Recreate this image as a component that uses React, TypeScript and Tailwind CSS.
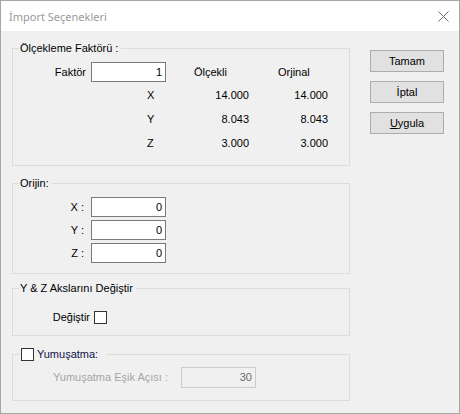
import React from 'react';

const rows = [
  { axis: 'X', scaled: '14.000', original: '14.000' },
  { axis: 'Y', scaled: '8.043', original: '8.043' },
  { axis: 'Z', scaled: '3.000', original: '3.000' },
];

const NumberBox: React.FC<{ value: string }> = ({ value }) => (
  <div className="flex h-[20px] w-[75px] items-center justify-end border border-[#7a7a7a] bg-white pr-[3px] text-black">
    {value}
  </div>
);

const CheckBox: React.FC = () => <div className="h-[13px] w-[13px] border border-[#333333] bg-white" />;

const DialogButton: React.FC<{ label: React.ReactNode }> = ({ label }) => (
  <button
    type="button"
    className="flex h-[22px] w-[74px] items-center justify-center border border-[#adadad] bg-[#e1e1e1] text-black"
  >
    {label}
  </button>
);

export default function App() {
  return (
    <div className="flex h-[414px] w-[460px] flex-col border border-[#a6a6a6] bg-[#f0f0f0] font-['Liberation_Sans',Arial,sans-serif] text-[11px] leading-[13px] text-black">
      <div className="flex h-[30px] shrink-0 items-center justify-between bg-white pl-[8px] pr-[9px]">
        <span className="font-['Noto_Sans',sans-serif] text-[11px] text-[#9a9a9a]">İmport Seçenekleri</span>
        <svg width="11" height="11" viewBox="0 0 11 11" className="mr-[1px]">
          <path d="M0.5 0.5 L10.5 10.5 M10.5 0.5 L0.5 10.5" stroke="#6b6b6b" strokeWidth="1" fill="none" />
        </svg>
      </div>

      <div className="flex flex-1 pl-[11px] pt-[11px]">
        <div className="flex w-[338px] flex-col">
          <fieldset className="h-[124px] border border-[#dcdcdc]">
            <legend className="ml-[6px] pl-[1px] pr-[3px] leading-[13px]">Ölçekleme Faktörü :</legend>
            <div className="mt-[7px] flex h-[20px] items-center">
              <span className="w-[73px] text-right">Faktör</span>
              <div className="ml-[5px]">
                <NumberBox value="1" />
              </div>
              <span className="ml-[28px] w-[84px]">Ölçekli</span>
              <span>Orjinal</span>
            </div>
            <div className="mt-[1px] flex flex-col">
              {rows.map((row) => (
                <div key={row.axis} className="flex h-[24px] items-center">
                  <span className="ml-[134px] w-[47px]">{row.axis}</span>
                  <span className="w-[55px] text-right">{row.scaled}</span>
                  <span className="ml-[29px] w-[50px] text-right">{row.original}</span>
                </div>
              ))}
            </div>
          </fieldset>

          <fieldset className="mt-[11px] h-[97px] border border-[#dcdcdc]">
            <legend className="ml-[6px] pl-[1px] pr-[3px] leading-[13px]">Orijin:</legend>
            <div className="mt-[7px] flex flex-col gap-[3px]">
              {['X', 'Y', 'Z'].map((axis) => (
                <div key={axis} className="flex h-[20px] items-center">
                  <span className="w-[71px] text-right">{axis} :</span>
                  <div className="ml-[7px]">
                    <NumberBox value="0" />
                  </div>
                </div>
              ))}
            </div>
          </fieldset>

          <fieldset className="mt-[8px] h-[54px] border border-[#dcdcdc]">
            <legend className="ml-[6px] pl-[1px] pr-[3px] leading-[13px]">Y &amp; Z Akslarını Değiştir</legend>
            <div className="mt-[16px] flex h-[13px] items-center">
              <span className="w-[77px] text-right">Değiştir</span>
              <div className="ml-[4px]">
                <CheckBox />
              </div>
            </div>
          </fieldset>

          <fieldset className="mt-[12px] h-[53px] border border-[#dcdcdc]">
            <legend className="ml-[6px] flex h-[13px] items-center gap-[3px] pl-[2px] pr-[8px] leading-[13px]">
              <CheckBox />
              <span className="text-[#12124a]">Yumuşatma:</span>
            </legend>
            <div className="mt-[6px] flex h-[21px] items-center">
              <span className="w-[155px] text-right text-[#a6a6a6]">Yumuşatma Eşik Açısı :</span>
              <div className="ml-[13px] flex h-[21px] w-[75px] items-center justify-end border border-[#cccccc] bg-[#f0f0f0] pr-[3px] text-[#6d6d6d]">
                30
              </div>
            </div>
          </fieldset>
        </div>

        <div className="ml-[20px] flex flex-col gap-[9px] pt-[8px]">
          <DialogButton label="Tamam" />
          <DialogButton label="İptal" />
          <DialogButton
            label={
              <span>
                <span className="underline">U</span>ygula
              </span>
            }
          />
        </div>
      </div>
    </div>
  );
}
